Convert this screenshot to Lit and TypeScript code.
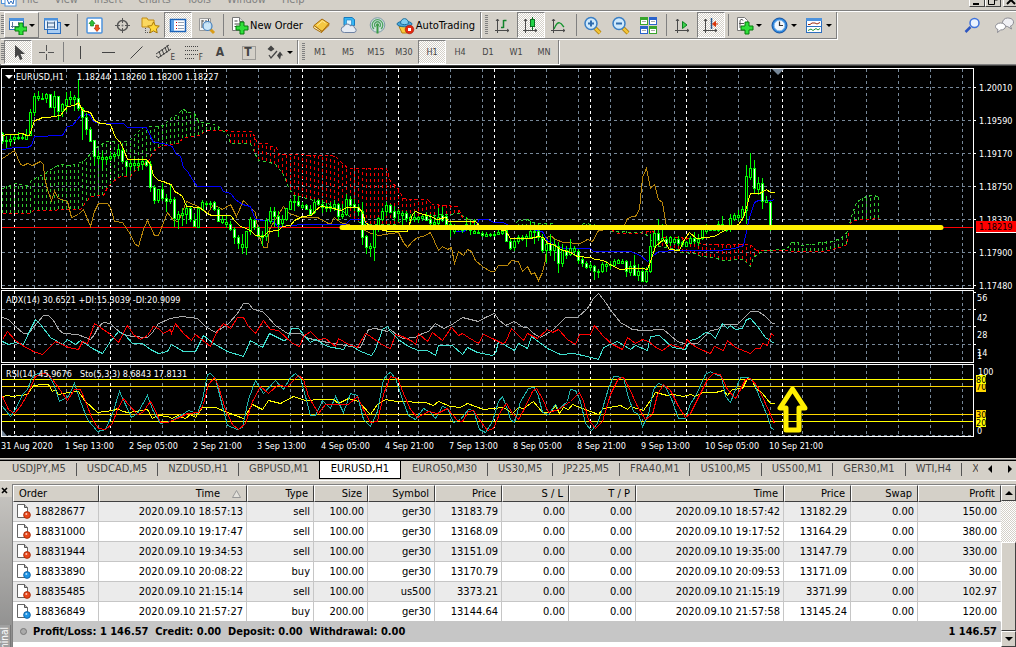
import { LitElement, html, svg, css } from 'lit';
import { customElement, property } from 'lit/decorators.js';

type Run = [number, string];

/* Readings are stored in thirds of a pixel, in runs that each have their own left edge. */
const toPoints = (runs: Run[], top: number): [number, number][] =>
  runs.flatMap(([left, text]) =>
    text.trim().split(/\s+/).map((pair) => {
      const [x, y] = pair.split(',').map(Number);
      return [Math.round(left + x / 3), Math.round(top + y / 3)] as [number, number];
    })
  );

const PRICE_TOP = 64;
const OSC_TOP = 286;

const conversion = toPoints([
  [0, '7,213 20,209 45,209 67,206 79,214 88,212 103,168 115,165 127,160 145,158 160,155 180,153 190,140 200,125 222,122 235,114 247,138 270,143 283,168 300,178 331,180 345,218 360,235 372,262 382,286 437,286 450,300 460,332 475,349 490,350 500,356 512,360 522,382 535,387 547,395 558,426 598,428 620,447 632,452 690,452 705,470 720,485 738,493 752,500 765,512 790,515 805,500 835,498 845,485 870,482 882,468 905,456 932,454 945,438 960,425 985,430'],
  [330, '0,430 30,438 50,428 85,430 97,445 105,475 125,488 175,502 230,502 235,490 245,450 255,442 270,447 300,455 320,465 345,458 355,470 435,472 450,490 525,498 540,522 600,522 625,515 640,520 650,537 670,540 690,555 720,565 740,577 780,578 795,586 820,588 850,605 870,616 900,612 935,612 950,616 960,590 975,545 1000,525'],
  [676, '-20,556 10,558 25,525 40,505 60,522 115,517 130,508 145,497 165,492 185,480 200,460 210,430 218,395 222,387 250,387 260,382 270,374 282,385 293,385'],
], PRICE_TOP);

const base = toPoints([
  [0, '7,254 30,253 40,250 80,250 92,243 103,215 185,214 200,186 215,182 230,165 240,152 268,150 280,172 300,178 370,178 380,190 437,190 450,215 460,234 490,237 515,245 525,266 540,275 548,310 560,320 575,345 590,365 660,367 670,380 690,388 705,405 725,420 750,425 765,465 820,470 830,485 880,484 900,481'],
  [330, '45,481 60,466 95,466 115,480 130,490 360,490 375,502 400,502 440,480 445,466 475,466 490,475 520,475 535,483 635,500 650,528 680,545 700,552 780,553 790,561 900,562 930,572 950,592 965,575 985,560'],
  [676, '5,559 130,559 175,552 200,542 210,500 220,460 235,415 245,409 285,409 293,406'],
], PRICE_TOP);

const lagging = toPoints([
  [0, '7,283 43,258 60,300 70,302 80,296 95,302 120,292 128,300 132,340 142,375 152,408 163,380 175,402 200,410 212,458 235,450 248,435 270,487 282,440 295,416 320,418 330,428 343,470 365,475 390,510 403,538 415,546 428,495 440,468 462,514 475,514 500,445 520,467 535,470 558,412 600,428 620,448 640,420 665,436 690,420 708,455 728,407 755,436 765,445 775,510 790,548 800,548 808,495 825,465 848,425 860,445 900,460 950,460 985,478'],
  [330, '0,480 13,458 30,475 50,480 90,490 115,505 145,513 205,505 218,535 230,550 245,530 260,520 280,515 300,505 312,530 325,558 337,545 350,555 362,548 373,598 385,560 398,572 410,555 422,560 435,588 455,605 480,620 493,622 505,602 530,602 543,588 563,590 577,620 590,605 603,630 613,625 625,648 637,625 645,585 652,520 660,512 675,525 700,535 750,537 770,525 785,532 805,498 880,490 890,462 905,455 915,457 928,435 937,340 949,313 961,373 972,360 985,405 997,413 1009,485'],
], PRICE_TOP);

const spanA = toPoints([
  [0, '7,372 45,358 60,360 80,362 95,345 130,330 165,305 185,300 210,302 250,290 275,262 300,240 320,232 385,230 400,215 425,188 490,184 500,172 515,155 535,150 547,133 560,144 583,148 595,172 650,182 665,197 680,206 690,237 750,237 765,270 775,288 800,292 825,300 850,330 865,370 880,392 910,400 950,410 980,416'],
  [330, '20,425 60,460 100,480 200,480 215,465 240,465 300,452 390,447 405,463 435,467 450,485 550,485 565,468 590,466 615,478 665,478 670,488 742,488 760,478 790,480 845,500 940,505 955,515 965,535 985,545 1010,550'],
  [676, '5,555 15,565 55,567 75,575 110,580 140,588 200,586 215,600 223,605 232,580 245,568 265,558 330,556 345,534 365,535 370,542 410,540 430,535 470,530 500,515 512,500 525,455 540,415 560,400 585,392 608,397'],
], PRICE_TOP);

const spanB = toPoints([
  [0, '7,448 90,448 100,438 240,435 270,397 310,393 322,370 340,352 360,337 390,335 410,310 440,295 460,260 480,245 535,236 548,218 600,213 615,199 755,200 765,225 775,236 800,236 810,245 828,250 835,270 985,272'],
  [330, '0,272 15,275 40,300 55,312 168,312 180,350 200,370 218,402 235,406 290,406 305,420 380,425 395,460 430,475 450,488 840,488 855,508 930,508 945,500 965,500 1000,518'],
  [676, '5,520 30,522 50,525 75,540 205,540 225,543 240,558 440,560 480,553 512,540 520,480 530,467 608,463'],
], PRICE_TOP);

/* high, low, body top, body bottom; a trailing 1 marks a falling bar */
const CANDLES = `205 240 208 232 1|215 252 228 232|212 245 226 232|210 235 220 224|205 228 219 223|210 228 219 223|195 228 212 224|135 215 145 214|88 155 97 145|80 110 97 101|88 108 101 105|86 118 90 103|90 132 91 130 1|82 155 97 130|95 167 97 140 1|118 160 121 140|85 145 104 122|80 122 98 104|92 140 99 104|46 140 102 131 1|130 228 132 160 1|148 212 160 196 1|190 235 194 230 1|228 306 228 276 1|260 300 275 282|260 315 279 286|275 300 280 284|265 290 275 281|265 285 269 275|243 275 256 272|245 295 257 291 1|288 330 292 306 1|288 320 297 306|286 312 297 304|286 322 296 302|282 318 290 299|288 310 292 302 1|290 385 301 370 1|362 420 368 408 1|375 418 376 408|358 410 376 402 1|390 444 401 412 1|360 420 406 412|400 490 404 461 1|440 495 451 466|432 485 448 454|420 480 432 450|430 475 432 466 1|450 490 467 487 1|430 490 433 488|408 440 414 434|412 430 418 421|412 432 416 420|412 442 415 436 1|430 475 436 472 1|456 480 466 474|455 492 474 481|472 500 480 495 1|490 540 495 520 1|512 555 519 537 1|510 570 540 548|500 572 502 548|458 512 465 502|465 498 468 488 1|488 520 489 515 1|500 545 512 518|462 530 468 515|430 480 442 470|430 490 442 456 1|440 518 456 480 1|452 485 466 478|432 470 433 466|405 438 411 434|393 440 411 414|396 430 411 424 1|415 435 424 430|420 438 424 436 1|422 455 436 450 1|405 450 415 445|405 425 409 420 1|408 448 421 430 1|418 445 427 433|415 445 426 433|408 440 421 428|418 468 421 456 1|420 465 450 457|390 455 406 450|396 430 406 422 1|405 440 420 430 1|420 455 430 442 1|415 542 441 518 1|512 570 517 549 1|538 578 546 551|484 590 496 549|458 505 461 496|432 470 441 466|415 455 423 442|420 448 422 444 1|425 472 441 458 1|435 475 440 447|440 490 448 452|440 475 448 462 1|450 480 460 468|440 475 460 465|455 478 460 466|450 470 455 462|445 472 456 468 1|450 485 466 477 1|455 485 474 480|432 485 460 478|430 475 454 468 1|450 490 456 480 1|470 518 480 496 1|480 510 494 500|484 500 490 496|484 506 492 498|460 500 480 490|470 512 482 498 1|465 510 500 506|490 510 503 507|500 518 506 514 1|505 518 511 515|507 518 509 514|505 518 510 513|495 514 503 509|488 512 500 508|490 532 498 530 1|525 558 530 552 1|525 560 530 550|514 540 520 532|514 530 519 525|510 550 516 521|470 525 500 520|490 540 500 505|480 530 500 520 1|510 568 522 559 1|528 598 541 558|510 575 540 558 1|525 590 541 557|535 627 545 598 1|540 610 559 597|545 585 558 572 1|525 576 551 571|545 575 552 560|555 600 560 587 1|575 608 586 597 1|590 615 597 608 1|595 620 603 610|603 648 607 622 1|615 642 620 624|595 628 600 622|590 625 600 605|590 615 600 604|585 608 590 602|585 600 589 596|585 600 591 596|588 640 591 622 1|590 635 605 624|572 633 604 632 1|600 650 620 632|610 655 622 650 1|610 656 620 650|510 628 547 620|490 565 506 547|466 545 506 528 1|480 535 522 528|515 550 524 538 1|515 545 520 535|520 540 524 534|515 545 526 536 1|530 548 535 541|530 550 535 547|515 540 523 537|505 540 522 532 1|510 545 524 534|490 528 495 522|480 510 490 500|484 502 490 498|484 500 488 498|470 503 481 498|455 500 480 496 1|484 505 490 498|450 504 463 496|448 470 454 464|438 472 454 460|425 470 436 458|302 480 337 437|266 348 312 340|288 388 312 373 1|340 392 358 375|342 434 358 410 1|395 418 408 413|410 500 414 485 1`
  .split('|').map((row) => row.split(' ').map(Number));

const adx = toPoints([
  [0, '7,92 25,98 45,120 70,142 85,142 110,108 128,86 145,86 160,102 175,128 190,140 230,144 270,158 283,145 295,120 310,108 330,112 345,125 370,145 395,150 440,152 455,138 475,112 510,97 545,91 590,97 615,120 645,138 685,110 710,80 730,50 745,52 760,68 785,76 800,90 825,118 860,142 900,140 915,152 950,163 1000,172 1020,175 1050,180 1080,182 1105,130 1125,126 1160,136'],
  [390, '0,128 20,148 35,155 75,152 95,140 115,135 135,110 160,127 180,118 215,92 240,100 265,105 285,92 313,80 325,100 345,118 373,106 400,123 410,122 430,140 450,152 485,133 525,92 560,92 590,65 610,37 625,22 640,40 665,78 690,108 725,128 755,133 820,130 860,165 890,173 900,168'],
  [690, '0,172 20,170 40,152 60,132 80,130 100,115 140,113 165,90 180,74 205,74 225,90 245,110 251,112'],
], OSC_TOP);
const minusDi = toPoints([
  [0, '7,160 20,135 45,163 65,178 100,195 127,205 145,185 165,165 205,182 235,190 245,165 262,172 283,110 300,122 330,145 355,168 380,116 400,145 420,158 440,148 460,120 475,125 490,140 510,130 512,140 525,112 550,140 572,163 585,145 630,180 645,145 670,112 690,125 710,92 728,92 745,120 765,140 788,102 810,130 835,133 875,172 897,180 910,150 930,135 955,158 975,155 1005,180 1015,155 1045,175 1070,183 1095,140 1110,150 1150,178'],
  [390, '0,185 15,145 35,150 65,165 75,175 85,142 110,165 125,138 155,163 182,122 205,148 215,140 235,152 265,172 280,145 305,155 335,172 345,168 362,127 400,163 410,142 440,155 470,128 485,138 505,130 530,160 555,175 567,145 600,145 613,118 640,150 665,175 695,188 710,152 735,170 755,158 775,165 800,185 817,193 840,175 880,185 890,160'],
  [690, '0,170 25,185 60,202 73,180 98,193 110,163 135,182 180,202 195,187 210,187 217,170 230,177 242,140 251,150'],
], OSC_TOP);
const plusDi = toPoints([
  [0, '7,165 25,173 45,168 70,175 85,140 105,98 120,115 150,152 185,175 200,160 225,173 240,162 275,185 305,202 330,165 355,135 375,148 395,172 425,170 450,188 475,200 500,195 512,175 550,195 585,195 610,148 640,172 680,195 730,210 750,162 787,183 808,142 850,162 860,158 872,125 895,125 930,168 945,160 980,180 1030,190 1040,172 1080,195 1112,207 1125,190 1145,130 1160,120'],
  [390, '0,135 25,160 55,180 85,192 110,192 135,207 145,178 185,178 215,203 230,183 260,197 305,208 315,200 323,165 345,178 373,193 385,172 410,187 422,150 470,185 510,205 550,200 590,210 625,220 640,182 680,165 720,190 735,178 770,192 780,150 808,147 845,182 885,190 895,170'],
  [690, '0,162 20,155 45,138 60,140 75,155 97,112 110,127 120,117 135,130 155,127 167,98 180,95 200,120 225,152 251,170'],
], OSC_TOP);

const rsi = toPoints([
  [0, '7,330 20,327 35,330 80,325 100,298 125,295 145,295 155,315 165,308 175,325 205,318 235,315 255,345 290,378 340,372 352,366 365,375 385,378 440,370 455,395 470,388 500,390 515,396 530,388 555,395 570,385 585,393 605,362 645,362 680,378 705,388 730,395 755,353 785,370 805,343 840,350 880,330 915,342 960,340 1000,338 1015,352 1045,335 1075,345 1110,383 1130,355 1155,338'],
  [390, '0,342 20,345 105,347 130,357 145,345 180,360 210,362 230,352 280,370 340,362 365,380 385,362 400,366 430,345 455,378 480,378 495,358 507,382 520,362 535,370 545,355 600,375 625,383 640,365 690,358 710,370 720,360 760,373 780,342 795,318 830,328 850,325 880,330'],
  [690, '0,325 15,330 35,318 75,318 100,313 110,327 125,308 155,305 170,275 185,282 195,305 215,320 240,350 251,352'],
], OSC_TOP);
const stoSignal = toPoints([
  [0, '7,330 25,370 43,382 60,360 80,325 105,270 125,262 145,263 165,290 200,342 222,308 240,310 255,345 275,400 295,425 315,430 335,410 350,370 370,335 385,355 410,383 425,378 450,345 465,372 480,408 500,408 530,395 560,380 595,378 610,355 625,295 643,272 655,300 675,370 695,415 715,428 735,410 755,345 780,300 805,320 830,298 860,300 895,268 910,280 925,330 955,380 975,355 1010,353 1045,355 1070,330 1090,370 1110,408 1130,405 1150,325'],
  [390, '0,270 20,275 40,320 60,370 80,392 115,375 140,382 170,365 200,402 215,405 235,375 250,372 265,395 290,432 310,425 330,375 348,352 365,380 383,400 400,372 425,315 437,307 455,335 475,378 505,370 540,345 567,318 580,345 595,400 615,427 635,405 660,325 685,275 698,272 715,300 740,360 765,398 785,385 800,325 820,295 840,312 865,360 885,393'],
  [690, '0,380 20,340 50,280 70,262 90,265 110,310 135,335 150,310 165,280 180,275 200,300 225,350 251,410'],
], OSC_TOP);
const stoMain = toPoints([
  [0, '7,360 30,390 45,370 65,325 80,310 95,270 110,260 140,262 160,290 177,345 205,330 223,292 240,345 260,400 290,435 315,428 335,380 357,315 375,355 392,393 410,380 440,328 455,370 480,410 510,405 545,385 565,372 590,380 605,340 620,265 630,262 645,275 665,360 680,418 710,428 725,422 745,340 765,283 790,320 825,283 850,310 870,272 885,260 900,275 915,330 930,387 945,387 965,342 990,365 1005,330 1028,378 1050,322 1070,328 1090,400 1110,420 1130,375 1150,280 1165,260'],
  [390, '0,258 15,275 35,340 55,388 75,400 100,367 120,378 135,397 155,360 170,365 190,408 210,400 235,370 250,372 268,430 285,437 305,405 325,345 337,330 350,370 360,400 373,408 390,345 415,305 432,302 445,330 457,378 475,383 495,353 505,370 530,345 540,310 555,312 570,345 585,410 603,432 620,410 635,365 655,305 670,270 698,272 710,325 730,375 745,383 757,420 775,385 790,310 805,292 825,300 845,345 865,397 885,395'],
  [690, '0,350 15,330 45,265 60,255 75,265 92,270 105,330 120,348 135,310 150,272 175,272 190,285 210,340 230,390 243,425 251,428'],
], OSC_TOP);

const valueAt = (line: [number, number][], x: number) => {
  const i = line.findIndex((p) => p[0] >= x);
  if (i <= 0) return line[0][1];
  const [a, b] = [line[i - 1], line[i]];
  return b[0] === a[0] ? b[1] : a[1] + ((b[1] - a[1]) * (x - a[0])) / (b[0] - a[0]);
};

const steps = (from: number, to: number, by: number) =>
  Array.from({ length: Math.floor((to - from) / by) + 1 }, (_, i) => from + i * by);

const trace = (line: [number, number][], cls: string) =>
  svg`<polyline class="trace ${cls}" points=${line.map(([x, y]) => `${x + 0.5},${y + 0.5}`).join(' ')}/>`;

const level = (y: number, cls: string) =>
  svg`<line class=${cls} x1="2" x2="200%" y1=${y + 0.5} y2=${y + 0.5}/>`;

const verticals = (top: number, bottom: number) => svg`
  ${steps(34, 2500, 32).map((x) => svg`<line class="grid" x1=${x + 0.5} x2=${x + 0.5} y1=${top} y2=${bottom}/>`)}
  ${steps(14, 782, 96).map((x) => svg`<line class="day" x1=${x + 0.5} x2=${x + 0.5} y1=${top} y2=${bottom}/>`)}`;

const cloud = () => steps(2, 878, 4).map((x) => {
  const a = Math.round(valueAt(spanA, x));
  const b = Math.round(valueAt(spanB, x));
  return Math.abs(a - b) < 2
    ? ''
    : svg`<line class="span ${a < b ? 'lime' : 'red'}" x1=${x + 0.5} x2=${x + 0.5} y1=${Math.max(a, b)} y2=${Math.min(a, b)}/>`;
});

const candles = () => CANDLES.map(([h, l, t, b, down], i) => {
  const x = 2 + i * 4;
  const y = (v: number) => Math.round(PRICE_TOP + v / 3);
  const height = Math.max(y(b) - y(t), 1);
  return svg`<line class="wick" x1=${x + 0.5} x2=${x + 0.5} y1=${y(h)} y2=${y(l)}/>
    <rect class=${down ? 'bar down' : 'bar'} x=${x - 0.5} y=${y(t) + 0.5} width="2" height=${height}/>`;
});

@customElement('price-chart')
export class PriceChart extends LitElement {
  static styles = css`
    :host { display: block; background: #000; padding: 2px 0 0 1px; color: #fff; }
    .panel { display: flex; margin-bottom: 1px; }
    .plot { flex: 1; min-width: 0; border: 1px solid #fff; }
    .plot svg, .scale svg { display: block; width: 100%; overflow: hidden; }
    .scale { width: 42px; flex: none; }
    .price svg { height: 219px; }
    .price .scale svg { height: 221px; }
    .adx svg { height: 71px; }
    .rsi svg { height: 71px; }
    svg { font: 9px 'DejaVu Sans Condensed', 'DejaVu Sans', sans-serif; fill: #fff; }
    line, polyline, rect, .tick { shape-rendering: crispEdges; }
    .grid { stroke: #778899; stroke-dasharray: 3 3; }
    .day { stroke: #fff; stroke-dasharray: 3 3; }
    .trace { fill: none; stroke-width: 1; }
    .yellow { stroke: #ff0; }
    .gold { stroke: #ffd700; }
    .blue { stroke: #00f; }
    .ochre { stroke: #b8860b; }
    .lime { stroke: #32cd32; }
    .red { stroke: #f00; }
    .silver { stroke: #a9a9a9; }
    .aqua { stroke: #40e0d0; }
    .teal { stroke: #20b2aa; }
    .dashed { stroke-dasharray: 3 3; }
    .span { stroke-dasharray: 3 3; }
    .wick { stroke: #0f0; }
    .bar { stroke: #0f0; fill: #000; }
    .bar.down { fill: #fff; }
    .trend { stroke: #ffef00; stroke-width: 5; stroke-linecap: round; shape-rendering: auto; }
    .arrow { fill: none; stroke: #ffef00; stroke-width: 5; stroke-linejoin: round; }
    .tick { stroke: #fff; }
    .dates { display: flex; height: 20px; overflow: hidden; white-space: nowrap;
      font: 9px/16px 'DejaVu Sans Condensed', 'DejaVu Sans', sans-serif; }
    .date { width: 64px; flex: none; }
    .ink { fill: #000; }
  `;

  render() {
    return html`
      <div class="panel price">
        <div class="plot">
          <svg role="img" aria-label="EURUSD hourly price">
            <g transform="translate(-2,-69)">
              ${steps(87, 285, 33).map((y) => level(y, 'grid'))}
              ${verticals(69, 288)}
              ${cloud()}
              ${trace(spanA, 'lime dashed')} ${trace(spanB, 'red dashed')}
              ${level(227, 'red')}
              ${trace(lagging, 'ochre')} ${trace(base, 'blue')}
              ${candles()}
              ${trace(conversion, 'yellow')}
              <line class="trend" x1="342" x2="941" y1="227.5" y2="227.5"/>
              <path d="M772 69h12l-6 6z" fill="#778899"/>
              <path d="M5 75h8l-4 4z"/>
              <text x="16" y="80">EURUSD,H1</text>
              <text x="77" y="80">1.18244 1.18260 1.18200 1.18227</text>
            </g>
          </svg>
        </div>
        <div class="scale">
          <svg>
            <g transform="translate(-974,-68)">
              ${['1.20010', '1.19590', '1.19170', '1.18750', '1.18330', '1.17900', '1.17480'].map((label, i) => svg`
                <path class="tick" d="M974 ${87.5 + i * 33}h2"/>
                <text x="979" y=${91 + i * 33}>${label}</text>`)}
              <rect x="976" y="221" width="40" height="11" fill="#f00"/>
              <rect x="976" y="232" width="40" height="1"/>
              <text class="ink" x="979" y="230">1.18219</text>
            </g>
          </svg>
        </div>
      </div>

      <div class="panel adx">
        <div class="plot">
          <svg role="img" aria-label="ADX indicator">
            <g transform="translate(-2,-291)">
              ${[309, 326, 344].map((y) => level(y, 'grid'))}
              ${verticals(291, 362)}
              ${trace(adx, 'silver')} ${trace(plusDi, 'aqua')} ${trace(minusDi, 'red')}
              <text x="6" y="303">ADX(14) 30.6521 +DI:15.3039 -DI:20.9099</text>
            </g>
          </svg>
        </div>
        <div class="scale">
          <svg>
            <g transform="translate(-974,-290)">
              ${[292, 309, 326, 344].map((y) => svg`<path class="tick" d="M974 ${y + 0.5}h2"/>`)}
              <text x="977" y="301">56</text>
              <text x="977" y="321">42</text>
              <text x="977" y="338">28</text>
              <text x="977" y="356">14</text>
              <text x="977" y="359">1</text>
            </g>
          </svg>
        </div>
      </div>

      <div class="panel rsi">
        <div class="plot">
          <svg role="img" aria-label="RSI and stochastic indicators">
            <g transform="translate(-2,-365)">
              ${level(435, 'grid')}
              ${verticals(365, 436)}
              ${level(379, 'yellow')} ${level(386, 'gold')} ${level(414, 'gold')} ${level(421, 'yellow')}
              ${trace(rsi, 'yellow')} ${trace(stoMain, 'teal')} ${trace(stoSignal, 'red')}
              <path d="M2 430l5 6h-5z" fill="#778899"/>
              <path class="arrow" d="M792.500 389L780 408h6v22h13v-22h6z"/>
              <text x="6" y="377">RSI(14) 45.9676</text>
              <text x="80" y="377">Sto(5,3,3) 8.6843 17.8131</text>
            </g>
          </svg>
        </div>
        <div class="scale">
          <svg>
            <g transform="translate(-974,-364)">
              <text x="978" y="375">100</text>
              <rect x="976" y="382" width="10" height="10" fill="#ffd700"/>
              <text class="ink" x="976" y="390">70</text>
              <rect x="976" y="375" width="10" height="9" fill="#ff0"/>
              <text class="ink" x="976" y="383">80</text>
              <rect x="976" y="410" width="10" height="9" fill="#ffd700"/>
              <text class="ink" x="976" y="418">30</text>
              <rect x="976" y="418" width="10" height="9" fill="#ff0"/>
              <text class="ink" x="976" y="426">20</text>
              <text x="977" y="434">0</text>
            </g>
          </svg>
        </div>
      </div>
      <div class="dates">
        ${['31 Aug 2020', '1 Sep 13:00', '2 Sep 05:00', '2 Sep 21:00', '3 Sep 13:00', '4 Sep 05:00', '4 Sep 21:00', '7 Sep 13:00', '8 Sep 05:00', '8 Sep 21:00', '9 Sep 13:00', '10 Sep 05:00', '10 Sep 21:00']
          .map((d) => html`<span class="date">${d}</span>`)}
      </div>`;
  }
}

const plus = (x: number, y: number) =>
  svg`<path d="M${x + 4} ${y}h4v4h4v4h-4v4h-4v-4h-4v-4h4z" fill="#2fe03a" stroke="#067a0c"/>`;
const axes = svg`<path d="M4.500 3v14M2 14.500h14M3 5l1.500-2 1.500 2M14 13l2 1.500-2 1.500" fill="none" stroke="#4a4a4a"/>`;

const ICONS: Record<string, unknown> = {
  newChart: svg`<rect x="1.500" y="2.500" width="14" height="11" fill="#fff" stroke="#2d6fbf"/><path d="M1 2h15v3h-15z" fill="#4d92dc"/><path d="M4.500 6v6M3 10.500h9M10.500 6v3" stroke="#5c7896" fill="none"/>${plus(7, 7)}`,
  profiles: svg`<rect x="4.500" y="6.500" width="13" height="11" fill="#a9cdf3" stroke="#2d6fbf"/><rect x="1.500" y="2.500" width="13" height="11" fill="#e4f0fc" stroke="#2d6fbf"/><path d="M1 2h14v2.500h-14z" fill="#4d92dc"/><path d="M4 7h8M4 7l1-1M4 11h8M12 11l-1-1M4.500 5.500v7M11.500 5.500v7" stroke="#3e6189" fill="none"/>`,
  market: svg`<rect x="2" y="2" width="15" height="15" rx="1" fill="#fff" stroke="#4d92dc" stroke-width="1.500"/><path d="M7 4l3 3.500h-1.500v2.500h-3v-2.500h-1.500z" fill="#2fc03a" stroke="#067a0c" stroke-width=".6"/><path d="M12 15.500l3-3.500h-1.500v-3h-3v3h-1.500z" fill="#f4561d" stroke="#a42a05" stroke-width=".6"/>`,
  target: svg`<circle cx="9.500" cy="9.500" r="5" fill="none" stroke="#555" stroke-width="1.500"/><path d="M9.500 2v5M9.500 12v5M2 9.500h5M12 9.500h5" stroke="#555"/><circle cx="9.500" cy="9.500" r="1" fill="#777"/>`,
  navigator: svg`<path d="M1 2h5l1 2h6v7h-12z" fill="#fbd860" stroke="#c18a12"/><path d="M4.500 12v5M6 16.500h3" stroke="#555" stroke-dasharray="1 1"/><path d="M12.500 6l1.800 3.600 4 .5-2.900 2.800.8 4-3.700-2-3.600 2 .7-4-2.900-2.800 4-.5z" fill="#ffd83a" stroke="#a87808"/>`,
  terminal: svg`<rect x="1.500" y="3.500" width="15" height="12" fill="#fff" stroke="#1c63b8" stroke-width="1.500"/><path d="M2 4h3v11h-3z" fill="#5ea2e6"/><path d="M7 6.500h1M7 9.500h1M7 12.500h1" stroke="#c00"/><path d="M9 6.500h6M9 9.500h6M9 12.500h6" stroke="#7a8ba0" stroke-width=".8"/>`,
  tester: svg`<path d="M2.500 2.500h11v12h-11z" fill="#f4f4f4" stroke="#999"/><path d="M5 4v8M5 5h2M9 4v4M7.500 6.500h3M11.500 3v5" stroke="#555"/><path d="M13 13l4 4" stroke="#d99c18" stroke-width="3"/><circle cx="10.500" cy="10" r="4.500" fill="#c7e4fa" fill-opacity=".9" stroke="#4680bd" stroke-width="1.200"/>`,
  newOrder: svg`<path d="M2.500 1.500h7l4 4v9h-11z" fill="#fff" stroke="#777"/><path d="M9.500 1.500v4h4" fill="#ddd" stroke="#777"/><path d="M4.500 5h3M4.500 8h6M4.500 10.500h5" stroke="#444"/>${plus(6, 6)}`,
  book: svg`<path d="M2 9.500l8-6.500 7 4.500-7 8z" fill="#f5c842" stroke="#a66a08"/><path d="M2 9.500c-1 2 0 3 1 3.300l6.500 3.700.5-1z" fill="#fff1b8" stroke="#a66a08"/><path d="M10 15.500l7-8v2l-7.500 7z" fill="#d8921a" stroke="#a66a08" stroke-width=".6"/><path d="M5 9.500l5.500-4.500 3 2" stroke="#ffe99a" fill="none"/>`,
  cloud: svg`<path d="M4 1.500h8l2.500 2v6h-10.500z" fill="#35b6f4" stroke="#1579bd"/><path d="M6.500 4h5v5h-5z" fill="#dff4ff" stroke="#1579bd" stroke-width=".6"/><path d="M4.500 16.500a3 3 0 0 1-.5-6 3.500 3.500 0 0 1 6.500-.5 2.500 2.500 0 0 1 4 2 2.300 2.300 0 0 1-.5 4.500z" fill="#e6ebf3" stroke="#6f82a2"/>`,
  signal: svg`<circle cx="9.500" cy="9" r="7.300" fill="#cfe0dc" stroke="#7f9ba8"/><path d="M6 13a5.300 5.300 0 1 1 7 0M7.500 11a3 3 0 1 1 4 0" fill="none" stroke="#4da360" stroke-width="1.300"/><circle cx="9.500" cy="8.700" r="1.500" fill="#3a9a45"/><path d="M9.500 9v8.500" stroke="#3a9a45" stroke-width="2"/>`,
  auto: svg`<path d="M3 10.500h11l-3 6.500h-5z" fill="#f7c93c" stroke="#b87f10"/><ellipse cx="8.500" cy="8" rx="7.500" ry="2.800" fill="#4aa6d8" stroke="#1d6f9e"/><path d="M4.500 7.500c0-6.500 8-6.500 8 0-2 1.500-6 1.500-8 0z" fill="#7fcdf0" stroke="#1d6f9e"/><circle cx="13.500" cy="13.500" r="4.300" fill="#e22a12" stroke="#a31204" stroke-width=".6"/><rect x="12" y="12" width="3" height="3" fill="#fff"/>`,
  bars: svg`${axes}<path d="M10.500 4v8M10.500 4.500h3M8 11.500h2.500" stroke="#12832a" stroke-width="1.500"/>`,
  candle: svg`${axes}<path d="M11.500 1v13" stroke="#0b6e1e"/><rect x="9.500" y="3.500" width="4" height="7" fill="#21d245" stroke="#0b6e1e"/>`,
  line: svg`${axes}<path d="M5 13c2-5 4-7 6-6 2 .8 2 2 4 4" fill="none" stroke="#12932c" stroke-width="1.300"/>`,
  zoomIn: svg`<path d="M12 12l5 5" stroke="#a87808" stroke-width="4"/><path d="M12 12l5 5" stroke="#f2c437" stroke-width="2.500"/><circle cx="8" cy="7.500" r="6" fill="#cfe9fb" stroke="#3b7fc4" stroke-width="1.500"/><path d="M5 7.500h6M8 4.500v6" stroke="#2f6cae" stroke-width="2"/>`,
  zoomOut: svg`<path d="M12 12l5 5" stroke="#a87808" stroke-width="4"/><path d="M12 12l5 5" stroke="#f2c437" stroke-width="2.500"/><circle cx="8" cy="7.500" r="6" fill="#cfe9fb" stroke="#3b7fc4" stroke-width="1.500"/><path d="M5 7.500h6" stroke="#2f6cae" stroke-width="2"/>`,
  tile: svg`<path d="M1 1h8v8h-8zM10 10h8v8h-8z" fill="#38a52c"/><path d="M10 1h8v8h-8zM1 10h8v8h-8z" fill="#2a63cc"/><path d="M2 4h6v4h-6zM11 4h6v4h-6zM2 13h6v4h-6zM11 13h6v4h-6z" fill="#fff"/><path d="M3 5.500h4M12 5.500h4M3 14.500h4M12 14.500h4" stroke="#aaa"/>`,
  scroll: svg`${axes}<path d="M9.500 5.500l4.500 3.500-4.500 3.500z" fill="#3ad04a" stroke="#0b8020"/>`,
  shift: svg`${axes}<path d="M10.500 2v11" stroke="#28568a" stroke-width="1.500"/><path d="M17 8h-4M14.500 5.500l-3 2.500 3 2.500z" fill="#d8340a" stroke="#d8340a"/>`,
  indicators: svg`<path d="M2.500 1.500h7l3 3v10h-10z" fill="#fff" stroke="#777"/><path d="M5 12v-7c0-2 3-2 3-.5M4 7.500h5" stroke="#555" fill="none"/>${plus(6, 6)}`,
  clock: svg`<circle cx="9.500" cy="9.500" r="7.500" fill="#2a84dc" stroke="#1753a0"/><circle cx="9.500" cy="9.500" r="5.300" fill="#f2f8fe" stroke="#8fc0ee"/><path d="M9.500 5.500v4h3.500" fill="none" stroke="#333" stroke-width="1.200"/>`,
  template: svg`<rect x="1.500" y="2.500" width="15" height="14" fill="#fff" stroke="#2d6fbf"/><path d="M1 2h16v3h-16z" fill="#4d92dc"/><path d="M2 10.500h14" stroke="#2d6fbf"/><path d="M3 8.500h2l2-1.500h3l2 1 3-1.500" stroke="#992b12" fill="none"/><path d="M3 14.500l3-1.500 2 1.500 3-2 2 1.500 2-1.500" stroke="#1f9436" fill="none"/>`,
  cursor: svg`<path d="M6 2v13l3-3 2 5 2.500-1-2-5h4.500z" fill="#444"/>`,
  cross: svg`<path d="M9.500 2v6M9.500 11v6M2 9.500h6M11 9.500h6" stroke="#555"/>`,
  vline: svg`<path d="M9.500 3v13" stroke="#444"/>`,
  hline: svg`<path d="M3 9.500h13" stroke="#444"/>`,
  trend: svg`<path d="M3.500 15.500l12-12" stroke="#444"/>`,
  channel: svg`<path d="M1 11l13-9M3 15l13-9M4 8l2 6M7 6l2 6M10 4l2 6M12 2l2 6M1 13l3 2" stroke="#444" fill="none"/>`,
  fibo: svg`<path d="M2 3.500h14M2 7.500h14M2 11.500h14M2 15.500h9" stroke="#444" stroke-dasharray="1 1"/>`,
  text: svg``,
  label: svg`<rect x="3.500" y="3.500" width="13" height="13" fill="none" stroke="#666" stroke-dasharray="1 1"/>`,
  shapes: svg`<path d="M5 2.500l3.500 3.500-3.500 2.500-3.500-2.500zM14 8.500l3 4h-2l-1 4-3-4z" fill="#444"/><path d="M3 12l2 3 6-7" stroke="#444" fill="none" stroke-width="1.300"/>`,
  search: svg`<path d="M7 11l-5 5" stroke="#2d55c0" stroke-width="2.500"/><circle cx="11" cy="7" r="4.500" fill="#eaf3ff" stroke="#3f73dc" stroke-width="1.500"/>`,
  chat: svg`<path d="M13 2c4 0 6 2 6 4s-1 3.500-3 4l1 3-4-2.500c-3 0-5-2-5-4s2-4.500 5-4.500z" fill="#f0f0f4" stroke="#8a8a92"/><path d="M6 7c3 0 5 1.500 5 3.500s-2 3.500-5 3.500l-3 2.500.5-3c-1.500-.5-2.500-1.500-2.500-3s2-3.500 5-3.500z" fill="#fff" stroke="#8a8a92"/>`,
};

const glyph = (name: string) => html`<svg class="icon" viewBox="0 0 19 19" aria-hidden="true">${ICONS[name]}</svg>`;

interface Tool { icon?: string; name: string; text?: string; mark?: string; drop?: boolean; on?: boolean; raised?: boolean; sep?: boolean; }
const sep: Tool = { name: '', sep: true };

const MAIN: Tool[] = [
  { icon: 'newChart', name: 'New chart', drop: true, raised: true }, { icon: 'profiles', name: 'Profiles', drop: true }, sep,
  { icon: 'market', name: 'Market Watch' }, { icon: 'target', name: 'Data Window' }, { icon: 'navigator', name: 'Navigator' },
  { icon: 'terminal', name: 'Terminal', on: true }, { icon: 'tester', name: 'Strategy Tester' }, sep,
  { icon: 'newOrder', name: 'New Order', text: 'New Order' }, { icon: 'book', name: 'MetaEditor' }, { icon: 'cloud', name: 'Hosting' },
  { icon: 'signal', name: 'Signals' }, { icon: 'auto', name: 'AutoTrading', text: 'AutoTrading' },
];
const CHARTS: Tool[] = [
  { icon: 'bars', name: 'Bar chart' }, { icon: 'candle', name: 'Candlesticks', on: true }, { icon: 'line', name: 'Line chart' }, sep,
  { icon: 'zoomIn', name: 'Zoom in' }, { icon: 'zoomOut', name: 'Zoom out' }, { icon: 'tile', name: 'Tile windows' }, sep,
  { icon: 'scroll', name: 'Auto scroll' }, { icon: 'shift', name: 'Chart shift', on: true }, sep,
  { icon: 'indicators', name: 'Indicators', drop: true }, { icon: 'clock', name: 'Periods', drop: true }, { icon: 'template', name: 'Templates', drop: true },
];
const DRAW: Tool[] = [
  { icon: 'cursor', name: 'Cursor', on: true }, { icon: 'cross', name: 'Crosshair' }, sep,
  { icon: 'vline', name: 'Vertical line' }, { icon: 'hline', name: 'Horizontal line' }, { icon: 'trend', name: 'Trendline' },
  { icon: 'channel', name: 'Channel', mark: 'E' }, { icon: 'fibo', name: 'Fibonacci', mark: 'F' },
  { icon: 'text', name: 'Text', mark: 'A' }, { icon: 'label', name: 'Text label', mark: 'T' }, { icon: 'shapes', name: 'Arrows', drop: true },
];
const FRAMES: Tool[] = ['M1', 'M5', 'M15', 'M30', 'H1', 'H4', 'D1', 'W1', 'MN'].map((name) => ({ name, on: name === 'H1' }));

@customElement('tool-group')
export class ToolGroup extends LitElement {
  @property({ attribute: false }) tools: Tool[] = [];

  static styles = css`
    :host { display: flex; align-items: stretch; height: 100%; box-sizing: border-box;
      border-right: 1px solid #808080; border-bottom: 1px solid #808080; box-shadow: 1px 1px 0 #fff; }
    .grip { width: 3px; margin: 3px 0 3px 1px;
      background: repeating-linear-gradient(#808080 0 1px, transparent 1px 2px); }
    :host(:not(:first-child)) .grip { margin: 3px 1px 3px 4px; }
    .tool { position: relative; display: flex; align-items: center; justify-content: center; gap: 2px;
      width: 28px; padding: 0; border: 1px solid transparent; background: none; color: #444;
      font: 9px 'DejaVu Sans Condensed', 'DejaVu Sans', sans-serif; white-space: nowrap; }
    .drop { width: 35px; }
    .wide { width: auto; padding: 0 4px 0 3px; gap: 1px; color: #000; font-size: 11px; }
    .raised { border-color: #fff #808080 #808080 #fff; }
    .on { border-color: #808080 #fff #fff #808080;
      background: repeating-conic-gradient(#fff 0 25%, #d4d0c8 0 50%) 0 0 / 2px 2px; }
    .sep { width: 1px; margin: 2px 2px 2px 3px; background: #808080; }
    .icon { width: 19px; height: 19px; flex: none; }
    .arrow { border: 3px solid transparent; border-top-color: #000; border-bottom: 0; }
    .mark { position: absolute; right: 2px; bottom: 1px; font-size: 8px; line-height: 8px; }
    .glyph { position: absolute; inset: 0; display: grid; place-items: center; font-size: 12px; font-weight: bold; }
  `;

  render() {
    return html`<span class="grip"></span>
      ${this.tools.map((t) => t.sep ? html`<span class="sep"></span>` : html`
        <button class="tool ${t.drop ? 'drop' : ''} ${t.text ? 'wide' : ''} ${t.raised ? 'raised' : ''} ${t.on ? 'on' : ''}"
          aria-label=${t.name} title=${t.name}>
          ${t.icon ? glyph(t.icon) : t.name}${t.text ?? ''}
          ${t.mark ? html`<span class=${t.mark < 'B' || t.mark > 'S' ? 'glyph' : 'mark'}>${t.mark}</span>` : ''}
          ${t.drop ? html`<span class="arrow"></span>` : ''}
        </button>`)}`;
  }
}

const COLUMNS: [string, number][] = [
  ['Order', 86], ['Time', 148], ['Type', 67], ['Size', 54], ['Symbol', 67], ['Price', 67],
  ['S / L', 67], ['T / P', 67], ['Time', 148], ['Price', 67], ['Swap', 67], ['Profit', 83],
];
const ORDERS = [
  ['18828677', '2020.09.10 18:57:13', 'sell', '100.00', 'ger30', '13183.79', '0.00', '0.00', '2020.09.10 18:57:42', '13182.29', '0.00', '150.00'],
  ['18831000', '2020.09.10 19:17:47', 'sell', '100.00', 'ger30', '13168.09', '0.00', '0.00', '2020.09.10 19:17:52', '13164.29', '0.00', '380.00'],
  ['18831944', '2020.09.10 19:34:53', 'sell', '100.00', 'ger30', '13151.09', '0.00', '0.00', '2020.09.10 19:35:00', '13147.79', '0.00', '330.00'],
  ['18833890', '2020.09.10 20:08:22', 'buy', '100.00', 'ger30', '13170.79', '0.00', '0.00', '2020.09.10 20:09:53', '13171.09', '0.00', '30.00'],
  ['18835485', '2020.09.10 21:15:14', 'sell', '100.00', 'us500', '3373.21', '0.00', '0.00', '2020.09.10 21:15:19', '3371.99', '0.00', '102.97'],
  ['18836849', '2020.09.10 21:57:27', 'buy', '200.00', 'ger30', '13144.64', '0.00', '0.00', '2020.09.10 21:57:58', '13145.24', '0.00', '120.00'],
];

@customElement('order-history')
export class OrderHistory extends LitElement {
  static styles = css`
    :host { display: flex; flex: 1; background: #fff; color: #000;
      font: 11px 'DejaVu Sans Condensed', 'DejaVu Sans', sans-serif; }
    .side { position: relative; width: 12px; overflow: hidden; display: flex; flex-direction: column; background: #d4d0c8; }
    .close { height: 13px; padding: 0; border: 0; background: none; display: grid; place-items: center; }
    .close svg { width: 7px; height: 7px; margin-right: 4px; }
    .strip { flex: 1; background: linear-gradient(#c4c2be, #8a8a8a); }
    .caption { position: absolute; top: 141px; left: 0; padding-top: 2px; background: #a0a0a0; color: #fff;
      font-size: 10px; line-height: 10px; writing-mode: vertical-rl; border-right: 1px solid #777; }
    .caption span { display: block; transform: rotate(180deg); }
    .body { flex: 1; min-width: 0; border-left: 1px solid #808080; border-top: 1px solid #808080; }
    table { width: 100%; table-layout: fixed; border-collapse: separate; border-spacing: 0; }
    th { height: 17px; box-sizing: border-box; padding: 0 5px; background: #d4d0c8; font-weight: normal; text-align: right;
      border: 1px solid; border-color: #fff #404040 #404040 #fff; line-height: 13px; }
    th:first-child { text-align: left; }
    td { height: 20px; box-sizing: border-box; padding: 0 3px; line-height: 19px; text-align: right; white-space: nowrap; overflow: hidden;
      border-right: 1px solid #c6c6c6; border-bottom: 1px solid #c6c6c6; }
    tbody tr:nth-child(odd) td { background: #ebebeb; }
    td:last-child { border-right-color: transparent; }
    .order { display: flex; align-items: center; gap: 4px; }
    .doc { width: 15px; height: 17px; flex: none; }
    .sort { width: 9px; height: 8px; margin: 0 0 0 12px; vertical-align: -1px; }
    tfoot td { background: #c6c6c6; border-color: #c6c6c6; font-weight: bold; }
    .sum { display: flex; align-items: center; gap: 6px; white-space: pre; }
    .dot { width: 7px; height: 7px; margin-left: 4px; box-sizing: border-box; border: 1px solid #777; border-radius: 50%; background: #aaa; }
    .scroll { width: 15px; display: flex; flex-direction: column; border-top: 1px solid #808080;
      background: repeating-conic-gradient(#fff 0 25%, #d4d0c8 0 50%) 0 0 / 2px 2px; }
    .step { height: 16px; padding: 0; display: grid; place-items: center; }
    .step, .thumb { background: #d4d0c8; border: 1px solid; border-color: #fff #404040 #404040 #fff; }
    .track { height: 41px; }
    .thumb { flex: 1; }
    .up, .down { border: 4px solid transparent; }
    .up { border-top: 0; border-bottom-color: #000; }
    .down { border-bottom: 0; border-top-color: #000; }
  `;

  private doc(kind: string) {
    return html`<svg class="doc" viewBox="0 0 15 17" aria-hidden="true">
      <path d="M1.500 1.500h7l3 3v10h-10z" fill="#fff" stroke="#666"/>
      <path d="M8.500 1.500v3h3" fill="#bbb" stroke="#555"/>
      <circle cx="11" cy="12" r="3.400" fill=${kind === 'sell' ? '#e8471a' : '#1d95e6'} stroke=${kind === 'sell' ? '#9c2604' : '#0b5a99'} stroke-width=".8"/>
      <circle cx="10.300" cy="11" r="1" fill="#fff" fill-opacity=".7"/></svg>`;
  }

  render() {
    return html`
      <div class="side">
        <button class="close" aria-label="Close"><svg viewBox="0 0 7 7"><path d="M1 1l5 5M6 1l-5 5" stroke="#000" stroke-width="1.600"/></svg></button>
        <div class="strip"></div>
        <div class="caption"><span>Terminal</span></div>
      </div>
      <div class="body">
        <table>
          <colgroup>${COLUMNS.map(([, w]) => html`<col width=${w}>`)}</colgroup>
          <thead><tr>${COLUMNS.map(([name], i) => html`<th scope="col">${name}${i === 1
            ? html`<svg class="sort" viewBox="0 0 9 8"><path d="M.5 7.500h8L4.500.5z" fill="#e4e2dc" stroke="#999"/></svg>` : ''}</th>`)}</tr></thead>
          <tbody>${ORDERS.map((row) => html`<tr>${row.map((cell, i) => html`<td>${i === 0
            ? html`<div class="order">${this.doc(row[2])}${cell}</div>` : cell}</td>`)}</tr>`)}</tbody>
          <tfoot><tr>
            <td colspan="10"><div class="sum"><span class="dot"></span><span>Profit/Loss: 1 146.57  Credit: 0.00  Deposit: 0.00  Withdrawal: 0.00</span></div></td>
            <td colspan="2">1 146.57</td>
          </tr></tfoot>
        </table>
      </div>
      <div class="scroll">
        <button class="step" aria-label="Scroll up"><span class="up"></span></button>
        <div class="track"></div><div class="thumb"></div>
        <button class="step" aria-label="Scroll down"><span class="down"></span></button>
      </div>`;
  }
}

const TABS = ['USDJPY,M5', 'USDCAD,M5', 'NZDUSD,H1', 'GBPUSD,M1', 'EURUSD,H1', 'EURO50,M30', 'US30,M5', 'JP225,M5',
  'FRA40,M1', 'US100,M5', 'US500,M1', 'GER30,M1', 'WTI,H4', 'X'];

@customElement('app-root')
export class AppRoot extends LitElement {
  static styles = css`
    :host { display: flex; flex-direction: column; min-height: 100vh; background: #d4d0c8; overflow: hidden;
      font: 11px 'DejaVu Sans Condensed', 'DejaVu Sans', sans-serif; color: #000; }
    .menu { display: flex; align-items: flex-end; height: 10px; overflow: hidden; border-bottom: 1px solid #808080; }
    .logo { width: 13px; height: 17px; margin: 0 0 3px 1px; flex: none; overflow: visible; }
    .entry { padding: 0 8px 3px; border: 0; background: none; color: #808080; font: inherit; line-height: 14px; }
    .window { display: flex; margin-left: auto; align-self: flex-end; padding-bottom: 3px; }
    .winbtn { width: 16px; height: 14px; padding: 0; background: #d4d0c8; border: 1px solid; border-color: #fff #404040 #404040 #fff; }
    .winbtn svg { display: block; width: 14px; height: 12px; }
    .winbtn:last-child { margin: 0 -3px 0 2px; }
    .bar { display: flex; height: 27px; }
    .first { border-top: 1px solid #fff; }
    .second { height: 26px; box-sizing: border-box; padding-top: 1px; border-bottom: 1px solid #808080; }
    .extra { margin-left: auto; display: flex; align-items: center; gap: 11px; padding-right: 2px; }
    .plain { padding: 0; border: 0; background: none; line-height: 0; }
    .extra .icon { width: 20px; height: 19px; overflow: visible; }
    .second tool-group { border-bottom: 0; }
    price-chart { border-top: 1px solid #404040; }
    .tabs { display: flex; height: 19px; padding-left: 2px; border-top: 1px solid #000; border-bottom: 1px solid #fff;
      box-shadow: 0 -1px 0 #808080; margin-top: 2px; margin-bottom: 3px; overflow: hidden; white-space: nowrap; }
    .tab { flex: none; padding: 0 11px 5px 10px; border: 0; background: none; color: #444; font: inherit; position: relative; }
    .tab:not(.active)::after { content: ''; position: absolute; right: 0; top: 2px; height: 13px; border-right: 1px solid #555; }
    .tab.active { background: #fff; color: #000; margin: -1px 1px 1px -1px; border: 1px solid #000; border-top-color: #fff; padding: 0 11px 2px; }
    .tab.cut { flex: 0 1 16px; min-width: 0; padding-right: 0; overflow: hidden; }
    .tab.cut::after { display: none; }
    .pager { margin-left: auto; display: flex; gap: 16px; align-items: center; padding: 0 4px 3px 0; }
    .left, .right { display: block; border: 4px solid transparent; }
    .left { border-left: 0; border-right-color: #000; }
    .right { border-right: 0; border-left-color: #000; }
  `;

  render() {
    return html`
      <div class="menu">
        <svg class="logo" viewBox="0 0 13 17"><rect x=".5" y=".5" width="12" height="13" fill="#fff" stroke="#4d92dc"/><rect x="4" y="6" width="11" height="10" fill="#fff" stroke="#4d92dc"/><path d="M6 9l2 5 2-3 2 3 1-5" fill="none" stroke="#2d6fbf"/></svg>
        ${['File', 'View', 'Insert', 'Charts', 'Tools', 'Window', 'Help'].map((m) => html`<button class="entry">${m}</button>`)}
        <div class="window">
          <button class="winbtn" aria-label="Minimize"><svg><path d="M3 9h6v2h-6z"/></svg></button>
          <button class="winbtn" aria-label="Restore"><svg><path d="M5.500 2v-1h6v5h-3M2.500 5.500h6v5h-6z" fill="none" stroke="#000"/></svg></button>
          <button class="winbtn" aria-label="Close"><svg><path d="M3 2l8 8M11 2l-8 8" stroke="#000" stroke-width="2"/></svg></button>
        </div>
      </div>
      <div class="bar first">
        <tool-group .tools=${MAIN}></tool-group>
        <tool-group .tools=${CHARTS}></tool-group>
        <div class="extra">
          <button class="plain" aria-label="Search">${glyph('search')}</button>
          <button class="plain" aria-label="Messages">${glyph('chat')}</button>
        </div>
      </div>
      <div class="bar second">
        <tool-group .tools=${DRAW}></tool-group>
        <tool-group .tools=${FRAMES}></tool-group>
      </div>
      <price-chart></price-chart>
      <div class="tabs" role="tablist">
        ${TABS.map((t) => html`<button role="tab" aria-selected=${t === 'EURUSD,H1'} class="tab ${t === 'EURUSD,H1' ? 'active' : ''} ${t === 'X' ? 'cut' : ''}">${t}</button>`)}
        <div class="pager">
          <button class="plain" aria-label="Previous tabs"><span class="left"></span></button>
          <button class="plain" aria-label="Next tabs"><span class="right"></span></button>
        </div>
      </div>
      <order-history></order-history>`;
  }
}
